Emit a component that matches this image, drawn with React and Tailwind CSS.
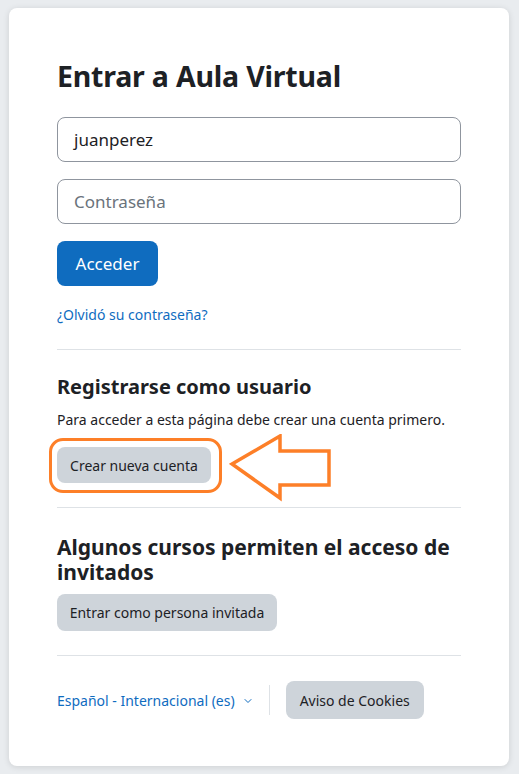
import { ChevronDown } from 'lucide-react'

const font = { fontFamily: '"Noto Sans", "Open Sans", sans-serif' }

function Divider({ className = '' }) {
  return <div className={`h-px bg-[#dee2e6] ${className}`} />
}

function GrayButton({ children, className = '' }) {
  return (
    <button className={`flex items-center whitespace-nowrap rounded-lg bg-[#ced4da] text-[#1d2125] text-[14px] px-[13px] ${className}`}>
      {children}
    </button>
  )
}

export default function App() {
  return (
    <div className="min-h-[774px] bg-[#e9ecef] pt-[8px] pl-[9px] pr-[10px] pb-[8px] text-[#1d2125]" style={font}>
      <div className="bg-white rounded-lg shadow-[0_1px_6px_rgba(0,0,0,0.12)] px-[48px] pt-[50px] pb-[47px] h-[758px]">
        <h1 className="text-[28.5px] font-bold leading-[36px] tracking-[-0.2px]">Entrar a Aula Virtual</h1>

        <div className="mt-[23px] h-[45px] rounded-lg border border-[#8f959e] flex items-center px-[16px] text-[17px] text-[#1d2125]">
          juanperez
        </div>
        <div className="mt-[17px] h-[45px] rounded-lg border border-[#8f959e] flex items-center px-[16px] text-[17px] text-[#6a737b]">
          Contraseña
        </div>
        <button className="block mt-[17px] h-[45px] w-[101px] rounded-lg bg-[#0f6cbf] text-white text-[17px]">
          Acceder
        </button>

        <div className="mt-[18px] leading-[21px]">
          <a className="text-[14px] text-[#0f6cbf]">¿Olvidó su contraseña?</a>
        </div>

        <Divider className="mt-[24px]" />

        <h2 className="mt-[24px] text-[20px] font-bold leading-[25px]">Registrarse como usuario</h2>
        <p className="mt-[10px] text-[14px] leading-[21px]">Para acceder a esta página debe crear una cuenta primero.</p>

        <div className="relative mt-[17px] h-[36px]">
          <GrayButton className="h-[36px] w-[154px] justify-center">Crear nueva cuenta</GrayButton>
          {/* annotation outline */}
          <div className="absolute left-[-8px] top-[-9px] w-[173px] h-[55px] rounded-[14px] border-[3px] border-[#fd7f28]" />
          <svg className="absolute left-[172px] top-[-13px]" width="102" height="68" viewBox="0 0 102 68">
            <path
              d="M3 30 L51 2 L51 17 L100 17 L100 51 L51 51 L51 64 Z"
              fill="none"
              stroke="#fd7f28"
              strokeWidth="3.5"
              strokeLinejoin="miter"
            />
          </svg>
        </div>

        <Divider className="mt-[24px]" />

        <h2 className="mt-[27px] text-[21px] font-bold leading-[25px]">Algunos cursos permiten el acceso de invitados</h2>
        <GrayButton className="mt-[9px] h-[37px] w-[220px] justify-center">Entrar como persona invitada</GrayButton>

        <Divider className="mt-[24px]" />

        <div className="mt-[25px] flex items-center h-[38px]">
          <a className="flex items-center text-[14px] text-[#0f6cbf]">
            Español - Internacional (es)
            <ChevronDown size={12} strokeWidth={2} className="ml-[7px] mt-[2px]" />
          </a>
          <div className="ml-[15px] w-px h-[30px] bg-[#dee2e6]" />
          <GrayButton className="ml-[16px] h-[38px] w-[138px] justify-center">Aviso de Cookies</GrayButton>
        </div>
      </div>
    </div>
  )
}
